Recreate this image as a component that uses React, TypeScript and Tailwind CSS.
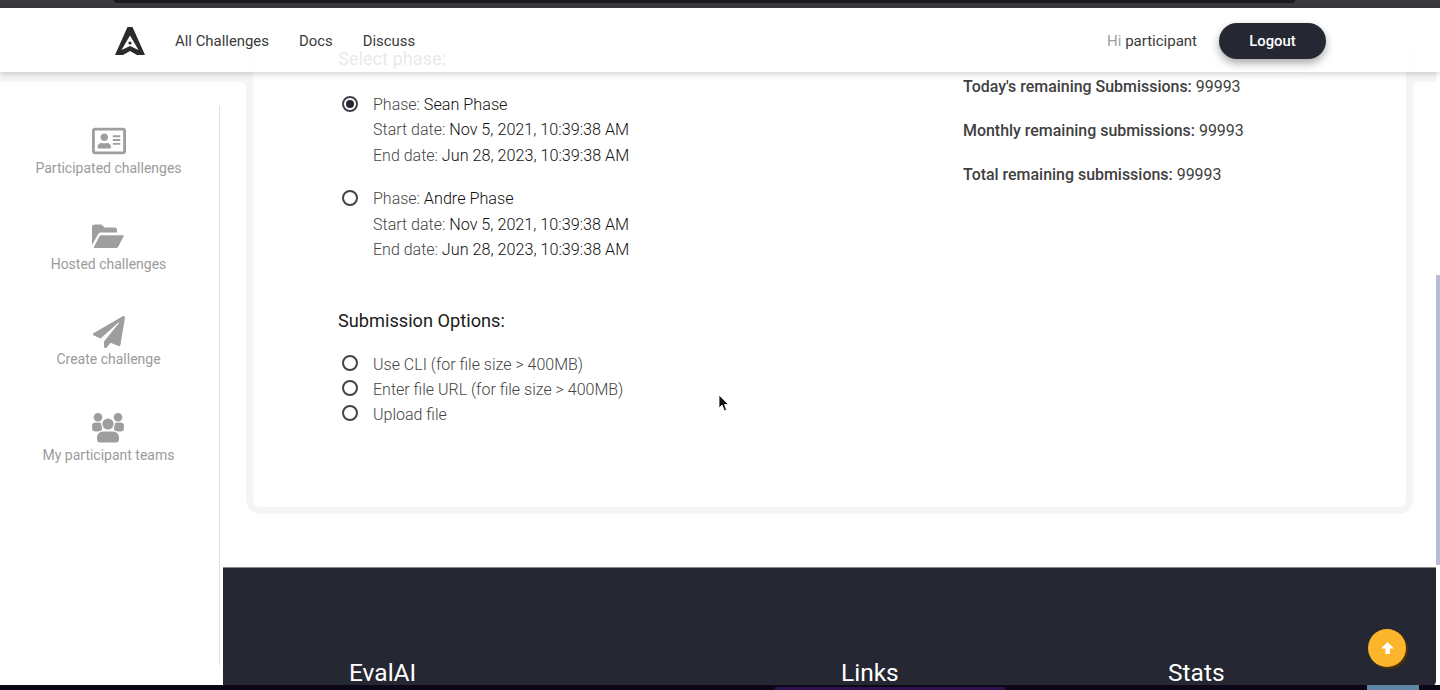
import { FaPaperPlane, FaRegAddressCard } from 'react-icons/fa';

function FolderIcon() {
  return (
    <svg width="32" height="24" viewBox="0 0 32 24" fill="#9e9e9e" className="mb-[8px]">
      <path d="M0 21 V3 a2.5 2.5 0 0 1 2.5-2.5 h7 l3 3 h10 a2.5 2.5 0 0 1 2.5 2.5 v2.5 H9 a3.5 3.5 0 0 0-3 2 Z" />
      <path d="M1.5 24 L7.2 12.5 a2.5 2.5 0 0 1 2.2-1.3 H32 L26.5 22.3 a2.5 2.5 0 0 1-2.2 1.7 Z" />
    </svg>
  );
}

function UsersIcon() {
  return (
    <svg width="32" height="30" viewBox="0 0 32 30" fill="#9e9e9e" className="mb-[4px]">
      <circle cx="6" cy="4.3" r="4.3" />
      <circle cx="26" cy="4.3" r="4.3" />
      <rect x="0" y="9.5" width="10" height="9" rx="3.5" />
      <rect x="22" y="9.5" width="10" height="9" rx="3.5" />
      <circle cx="16" cy="11" r="6.2" stroke="#fff" strokeWidth="1.2" />
      <path d="M4.5 24 a6 6 0 0 1 6-6 h11 a6 6 0 0 1 6 6 v3 a3 3 0 0 1-3 3 h-17 a3 3 0 0 1-3-3 Z" stroke="#fff" strokeWidth="1.2" />
    </svg>
  );
}

const SIDE_ITEMS = [
  { label: 'Participated challenges', icon: <FaRegAddressCard className="mb-[2px] text-[34px] text-[#9e9e9e]" /> },
  { label: 'Hosted challenges', icon: <FolderIcon /> },
  { label: 'Create challenge', icon: <FaPaperPlane className="mb-[3px] text-[32px] text-[#9e9e9e]" /> },
  { label: 'My participant teams', icon: <UsersIcon /> },
];

const PHASES = [
  { name: 'Sean Phase', selected: true },
  { name: 'Andre Phase', selected: false },
];

const QUOTAS = [
  { label: "Today's remaining Submissions:", value: '99993' },
  { label: 'Monthly remaining submissions:', value: '99993' },
  { label: 'Total remaining submissions:', value: '99993' },
];

const OPTIONS = ['Use CLI (for file size > 400MB)', 'Enter file URL (for file size > 400MB)', 'Upload file'];

function Radio({ on }: { on?: boolean }) {
  return (
    <span className="flex h-4 w-4 shrink-0 items-center justify-center rounded-full border-2 border-[#444]">
      {on && <span className="h-2 w-2 rounded-full bg-[#252733]" />}
    </span>
  );
}

function Logo() {
  return (
    <svg width="30" height="28" viewBox="0 0 30 28" className="shrink-0">
      <path
        fill="#2b2b2e"
        fillRule="evenodd"
        d="M12.5 0 H17.5 L30 28 H22 L15 24 L8 28 H0 Z M15 8.5 L6.5 23 L15 19 L23.5 23 Z"
      />
      <circle cx="15" cy="16" r="1.6" fill="#2b2b2e" />
    </svg>
  );
}

export default function App() {
  return (
    <div className="relative flex h-[690px] w-[1440px] flex-col overflow-hidden bg-white font-['Roboto',sans-serif]">
      {/* Top strip of the recording */}
      <div className="h-2 shrink-0 bg-[#3a3a3c] px-[114px]">
        <div className="mr-[31px] h-[3px] rounded-b-md bg-[#1b1b1d]" />
      </div>

      {/* Navbar */}
      <nav className="relative z-10 flex h-16 shrink-0 items-center justify-between bg-white/90 pl-[115px] pr-[114px] pt-[2px] shadow-[0_2px_6px_rgba(0,0,0,0.18)]">
        <div className="flex items-center">
          <Logo />
          <div className="ml-[30px] flex gap-[30px] text-[14.9px] text-[#3a3a3a]">
            <span>All Challenges</span>
            <span>Docs</span>
            <span>Discuss</span>
          </div>
        </div>
        <div className="flex items-center gap-[22px]">
          <span className="text-[15px] text-[#3a3a3a]">
            <span className="text-[#9e9e9e]">Hi</span> participant
          </span>
          <button className="h-9 w-[107px] rounded-full bg-[#252733] text-[14.8px] font-medium text-white shadow-[0_4px_8px_rgba(0,0,0,0.35)]">
            Logout
          </button>
        </div>
      </nav>

      <div className="flex min-h-0 flex-1">
        {/* Sidebar */}
        <aside className="w-[223px] shrink-0 bg-[#f5f5f5] pt-[10px]">
          <div className="h-full bg-white pt-6">
            <div className="flex h-[559px] w-[220px] flex-col items-center gap-[40.7px] border-r border-[#e2e2e2] pr-[2px] pt-[16px]">
              {SIDE_ITEMS.map(({ label, icon }) => (
                <div key={label} className="flex h-[55px] flex-col items-center justify-end text-[14px] text-[#9b9b9b]">
                  {icon}
                  <span className="leading-[17px]">{label}</span>
                </div>
              ))}
            </div>
          </div>
        </aside>

        {/* Main column */}
        <div className="flex w-[1213px] shrink-0 flex-col">
          <div className="flex h-[442px] shrink-0">
            <div className="w-[23px] shrink-0">
              <div className="h-4 bg-[#f5f5f5] pt-[10px]">
                <div className="h-[6px] rounded-tr-md bg-white" />
              </div>
            </div>
            <section className="relative -mt-[26px] flex w-[1167px] shrink-0 rounded-b-[14px] border-x-[7px] border-b-[7px] border-[#f5f5f5] bg-white pl-[85px]">
              <div className="w-[625px] shrink-0 pt-[3px]">
                <h3 className="text-[18.2px] leading-5 text-[#1b1b1b]">Select phase:</h3>
                <div className="mt-[22.6px] flex flex-col gap-[18.4px] pl-1">
                  {PHASES.map((p) => (
                    <label key={p.name} className="flex gap-[15px] text-[16px] font-light leading-[25.5px] text-[#444]">
                      <span className="mt-[4px]"><Radio on={p.selected} /></span>
                      <span>
                        <span className="block">Phase: <span className="text-[16.2px] text-[#111]">{p.name}</span></span>
                        <span className="block">Start date: <span className="text-[16.2px] text-[#111]">Nov 5, 2021, 10:39:38 AM</span></span>
                        <span className="block">End date: <span className="text-[16.2px] text-[#111]">Jun 28, 2023, 10:39:38 AM</span></span>
                      </span>
                    </label>
                  ))}
                </div>
                <h3 className="mt-[48px] text-[18.2px] leading-5 text-[#1b1b1b]">Submission Options:</h3>
                <div className="mt-[21px] flex flex-col pl-1 text-[16px] font-light leading-[25px] text-[#444]">
                  {OPTIONS.map((o) => (
                    <label key={o} className="flex items-center gap-[15px]">
                      <span className="-mt-[2px]"><Radio /></span>
                      <span>{o}</span>
                    </label>
                  ))}
                </div>
              </div>
              <div className="flex flex-col gap-[24px] pt-[31px] text-[15.95px] leading-5 text-[#3f3f3f]">
                {QUOTAS.map((q) => (
                  <p key={q.label}>
                    <span className="font-medium">{q.label}</span> {q.value}
                  </p>
                ))}
              </div>
              {/* Cursor */}
              <svg width="12" height="18" viewBox="0 0 12 18" className="absolute left-[465px] top-[348px]">
                <path d="M1 1 V14 L4 11 L6.5 17 L8.5 16 L6.5 10.5 H10.5 Z" fill="#111" stroke="#fff" strokeWidth="0.8" />
              </svg>
            </section>
            <div className="flex-1">
              <div className="h-4 bg-[#f5f5f5] pt-[10px]">
                <div className="h-[6px] rounded-tl-md bg-white" />
              </div>
            </div>
          </div>
          <footer className="mt-[53px] flex flex-1 items-start rounded-br-md border-t border-[#8a8a8a] bg-[#252733] pl-[126px] pt-[91px] text-[24.5px] leading-7 text-white">
            <span className="w-[492px]">EvalAI</span>
            <span className="w-[327px]">Links</span>
            <span>Stats</span>
          </footer>
        </div>

        {/* Scrollbar */}
        <div className="flex-1 pt-[203px]">
          <div className="h-[290px] bg-[#b7bcd8]" />
        </div>
      </div>

      {/* Bottom strip of the recording */}
      <div className="flex h-[5px] shrink-0 bg-[#0c0716]">
        <div className="ml-[775px] mt-[2px] h-[3px] w-[230px] bg-[#2e1250]" />
        <div className="ml-[362px] h-[5px] w-[52px] bg-[#5f86a6]" />
      </div>

      {/* Back to top */}
      <button className="absolute left-[1368px] top-[629px] z-10 flex h-[38px] w-[38px] items-center justify-center rounded-full bg-[#fdb52b] shadow-[2px_2px_2px_rgba(90,55,0,0.8)]">
        <svg width="13" height="12" viewBox="0 0 13 12" fill="#fff">
          <path d="M6.5 0 L13 6.5 H9 V12 H4.3 V6.5 H0 Z" />
        </svg>
      </button>
    </div>
  );
}
